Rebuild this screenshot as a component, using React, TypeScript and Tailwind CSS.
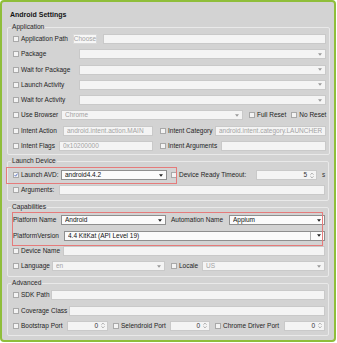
import React from "react";

type Kids = { children?: React.ReactNode };

function Box({ checked }: { checked?: boolean }) {
  return (
    <span className="flex h-[6px] w-[6px] shrink-0 items-center justify-center border border-[#a9a9a9] bg-[#f3f3f3]">
      {checked && (
        <svg viewBox="0 0 8 8" className="h-[6px] w-[6px]">
          <path d="M1.2 4.3 L3.2 6.4 L7 1.2" fill="none" stroke="#2b4db8" strokeWidth="1.5" />
        </svg>
      )}
    </span>
  );
}

function Lbl({ w, check, checked, children }: Kids & { w: string; check?: boolean; checked?: boolean }) {
  return (
    <div className={`flex shrink-0 items-center gap-[2px] ${w}`}>
      {check && <Box checked={checked} />}
      <span className="whitespace-nowrap">{children}</span>
    </div>
  );
}

function Arrow({ dark }: { dark?: boolean }) {
  return (
    <svg viewBox="0 0 6 4" className="ml-[2px] h-[3px] w-[4px] shrink-0">
      <path d="M0 0 L6 0 L3 4 Z" fill={dark ? "#222" : "#9a9a9a"} />
    </svg>
  );
}

function Field({ w = "flex-1", text, dim, arrow }: { w?: string; text?: string; dim?: boolean; arrow?: boolean }) {
  return (
    <div className={`flex h-[10px] min-w-0 items-center border border-[#c9c9c9] bg-[#f4f4f4] px-[3px] ${w}`}>
      <span className={`min-w-0 flex-1 truncate ${dim ? "text-[#a3a3a3]" : "text-[#1e1e1e]"}`}>{text}</span>
      {arrow && <Arrow />}
    </div>
  );
}

function Select({ w = "flex-1", text }: { w?: string; text: string }) {
  return (
    <div className={`flex h-[10px] min-w-0 items-center border border-[#8f8f8f] bg-[#fbfbfb] px-[3px] ${w}`}>
      <span className="min-w-0 flex-1 truncate text-[#111]">{text}</span>
      <Arrow dark />
    </div>
  );
}

function Spin({ w = "flex-1", value }: { w?: string; value: string }) {
  return (
    <div className={`flex h-[10px] min-w-0 items-center border border-[#c9c9c9] bg-[#f4f4f4] pl-[3px] pr-[2px] ${w}`}>
      <span className="flex-1 text-right text-[#333]">{value}</span>
      <svg viewBox="0 0 5 8" className="ml-[3px] h-[7px] w-[4px] shrink-0">
        <path d="M0.5 3 L2.5 1 L4.5 3 M0.5 5 L2.5 7 L4.5 5" fill="none" stroke="#8a8a8a" strokeWidth="0.8" />
      </svg>
    </div>
  );
}

function Row({ children }: Kids) {
  return <div className="flex h-[10px] items-center">{children}</div>;
}

function Group({ title, pad, children }: Kids & { title: string; pad: string }) {
  return (
    <fieldset className={`mx-[5px] rounded-[2px] border border-[#e9e9e9] pl-[5px] pr-[3px] ${pad}`}>
      <legend className="ml-[-2px] px-[1px] text-[6.6px] leading-[8px] text-[#2a2a2a]">{title}</legend>
      <div className="flex flex-col gap-[5.3px]">{children}</div>
    </fieldset>
  );
}

export default function App() {
  return (
    <div className="h-[343px] w-[337px] bg-white font-['Liberation_Sans',Arial,sans-serif] text-[6.5px] leading-[10px] text-[#1e1e1e]">
      <div className="relative flex h-[342px] w-[336px] flex-col rounded-[4px] border-2 border-[#8fbe3a] bg-[#d3d3d3]">
        <h1 className="ml-[8px] mt-[8px] text-[7px] font-bold leading-[10px] text-[#151515]">Android Settings</h1>

        <div className="mt-[3px]">
          <Group title="Application" pad="pt-[3px] pb-[3px]">
            <Row>
              <Lbl w="w-[60px]" check>Application Path</Lbl>
              <div className="flex h-[10px] w-[24px] shrink-0 items-center justify-center border border-[#d9d9d9] bg-[#f7f7f7] text-[#a3a3a3]">
                Choose
              </div>
              <div className="w-[6px] shrink-0" />
              <Field />
            </Row>
            <Row>
              <Lbl w="w-[66px]" check>Package</Lbl>
              <Field arrow />
            </Row>
            <Row>
              <Lbl w="w-[66px]" check>Wait for Package</Lbl>
              <Field arrow />
            </Row>
            <Row>
              <Lbl w="w-[66px]" check>Launch Activity</Lbl>
              <Field arrow />
            </Row>
            <Row>
              <Lbl w="w-[66px]" check>Wait for Activity</Lbl>
              <Field arrow />
            </Row>
            <Row>
              <Lbl w="w-[48px]" check>Use Browser</Lbl>
              <Field w="w-[182px] shrink-0" text="Chrome" dim arrow />
              <div className="ml-[6px] flex items-center gap-[5px]">
                <Lbl w="" check>Full Reset</Lbl>
                <Lbl w="" check>No Reset</Lbl>
              </div>
            </Row>
            <Row>
              <Lbl w="w-[50px]" check>Intent Action</Lbl>
              <Field w="w-[90px] shrink-0" text="android.intent.action.MAIN" dim />
              <div className="w-[7px] shrink-0" />
              <Lbl w="w-[55px]" check>Intent Category</Lbl>
              <Field text="android.intent.category.LAUNCHER" dim />
            </Row>
            <Row>
              <Lbl w="w-[46px]" check>Intent Flags</Lbl>
              <Field w="w-[94px] shrink-0" text="0x10200000" dim />
              <div className="w-[7px] shrink-0" />
              <Lbl w="w-[61px]" check>Intent Arguments</Lbl>
              <Field />
            </Row>
          </Group>
        </div>

        <div className="mt-[2px]">
          <Group title="Launch Device" pad="pt-[5px] pb-[5px]">
            <Row>
              <Lbl w="w-[48px]" check checked>Launch AVD:</Lbl>
              <Select w="w-[106px] shrink-0" text="android4.4.2" />
              <div className="w-[4px] shrink-0" />
              <Lbl w="w-[85px]" check>Device Ready Timeout:</Lbl>
              <Spin w="w-[61px] shrink-0" value="5" />
              <span className="ml-[5px] text-[#333]">s</span>
            </Row>
            <Row>
              <Lbl w="w-[46px]" check>Arguments:</Lbl>
              <Field />
            </Row>
          </Group>
        </div>

        <div className="mt-[2px]">
          <Group title="Capabilities" pad="pt-[4px] pb-[5px]">
            <Row>
              <Lbl w="w-[48px]">Platform Name</Lbl>
              <Select w="w-[105px] shrink-0" text="Android" />
              <div className="w-[5px] shrink-0" />
              <Lbl w="w-[58px]">Automation Name</Lbl>
              <Select text="Appium" />
            </Row>
            <Row>
              <Lbl w="w-[51px]">PlatformVersion</Lbl>
              <div className="flex h-[10px] min-w-0 flex-1 items-center border border-[#8f8f8f] bg-[#fbfbfb] pl-[3px] pr-[3px]">
                <span className="min-w-0 flex-1 truncate text-[#111]">4.4 KitKat (API Level 19)</span>
                <span className="mr-[4px] h-[8px] w-[1px] bg-[#b0b0b0]" />
                <Arrow dark />
              </div>
            </Row>
            <Row>
              <Lbl w="w-[50px]" check>Device Name</Lbl>
              <Field />
            </Row>
            <Row>
              <Lbl w="w-[39px]" check>Language</Lbl>
              <Field w="w-[113px] shrink-0" text="en" dim arrow />
              <div className="w-[6px] shrink-0" />
              <Lbl w="w-[31px]" check>Locale</Lbl>
              <Field text="US" dim arrow />
            </Row>
          </Group>
        </div>

        <div className="mt-[2px]">
          <Group title="Advanced" pad="pt-[3px] pb-[4px]">
            <Row>
              <Lbl w="w-[38px]" check>SDK Path</Lbl>
              <Field />
            </Row>
            <Row>
              <Lbl w="w-[56px]" check>Coverage Class</Lbl>
              <Field />
            </Row>
            <Row>
              <Lbl w="w-[54px]" check>Bootstrap Port</Lbl>
              <Spin w="w-[41px] shrink-0" value="0" />
              <div className="w-[5px] shrink-0" />
              <Lbl w="w-[57px]" check>Selendroid Port</Lbl>
              <Spin w="w-[40px] shrink-0" value="0" />
              <div className="w-[5px] shrink-0" />
              <Lbl w="w-[69px]" check>Chrome Driver Port</Lbl>
              <Spin value="0" />
            </Row>
          </Group>
        </div>

        {/* annotation boxes drawn over the form */}
        <div className="pointer-events-none absolute left-[4px] top-[165px] h-[17px] w-[171px] border border-[#e57b7b]" />
        <div className="pointer-events-none absolute left-[10px] top-[210px] h-[34px] w-[311px] border border-[#e57b7b]" />
      </div>
    </div>
  );
}
